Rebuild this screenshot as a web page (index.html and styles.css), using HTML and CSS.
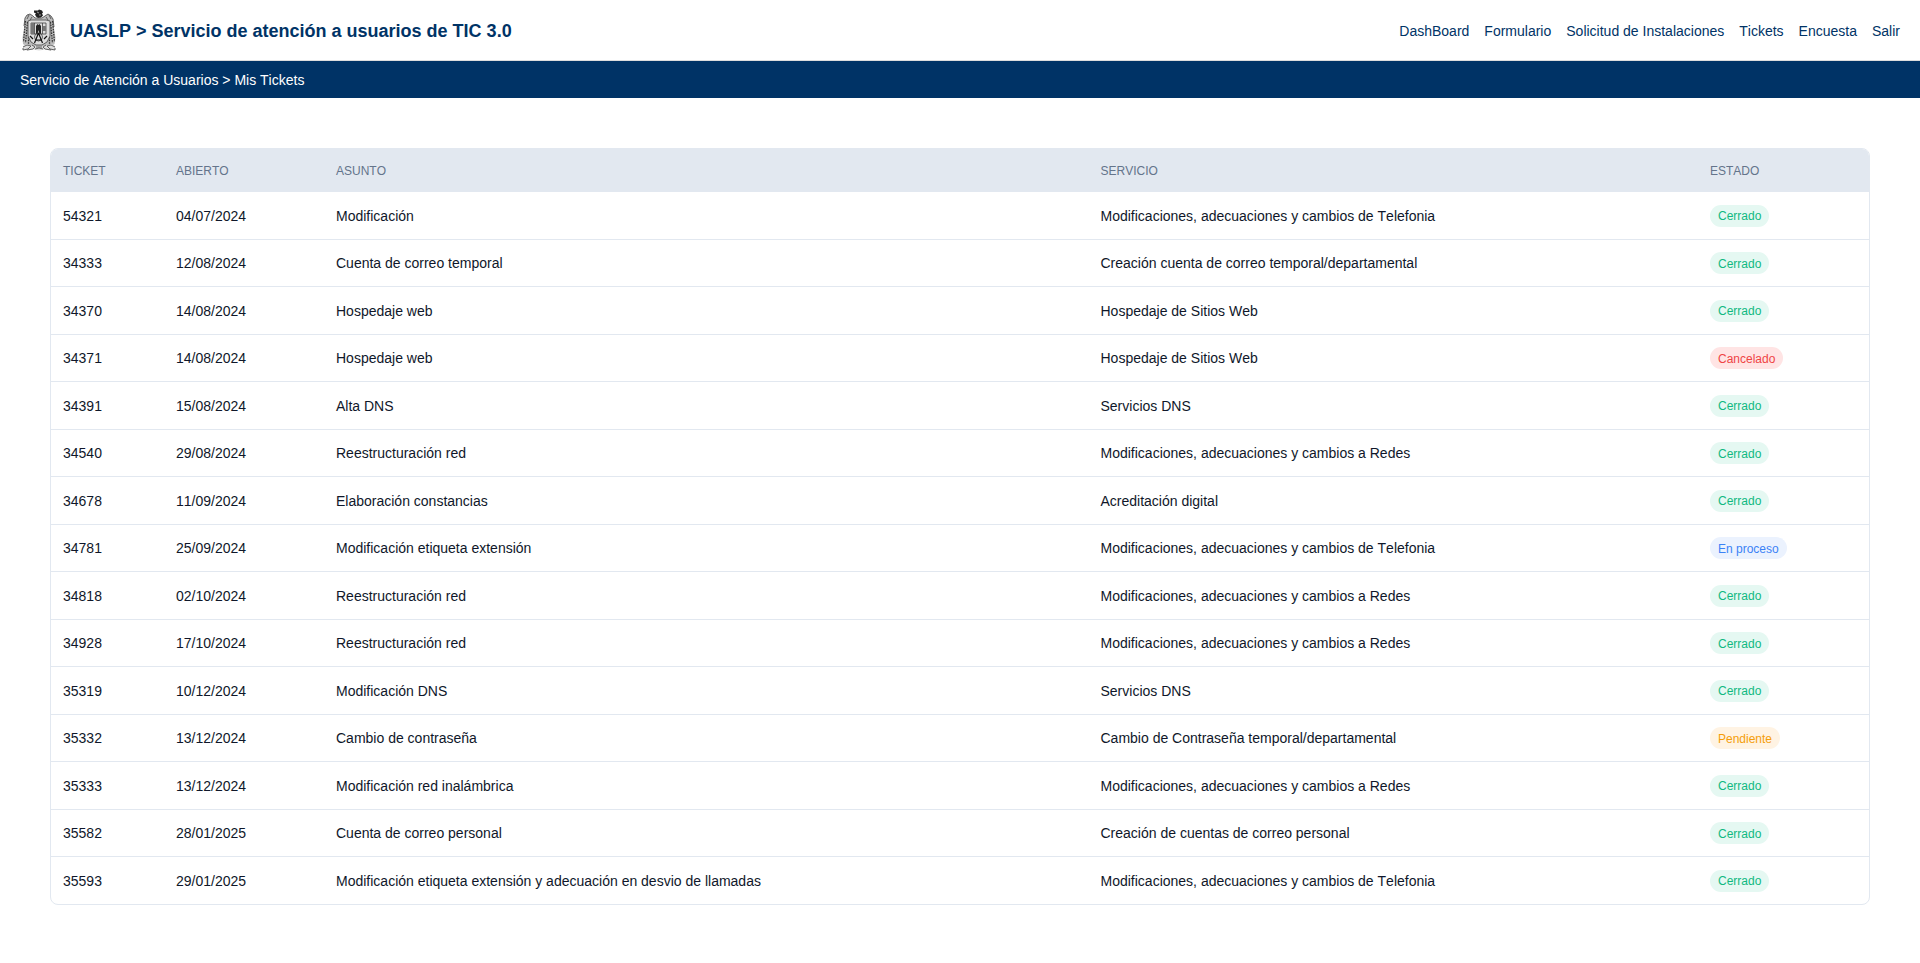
FILE: index.html
```html
<!DOCTYPE html>
<html lang="es">
<head>
<meta charset="utf-8">
<title>Mis Tickets</title>
<link rel="stylesheet" href="styles.css">
</head>
<body>
<header class="header">
  <div class="brand">
    <svg class="crest" viewBox="0 0 34 42" aria-hidden="true">
      <!-- eagle head -->
      <path class="ink" d="M12 1.500h4l1-1 3 1 1 2-1 1 1 2-2 2-3 .5-2-1.500-1-2 1-1-2-1z"/>
      <path class="light" d="M15 3l2 1M17 6l2 0"/>
      <!-- wings -->
      <path class="grey" d="M3 9l2-3 3-1 3 2 2 2h7l3-2 3-2 3 2 2 3 1 9 1.500 10-1 6-3 2H4l-3-2-.5-6 1.500-10z"/>
      <path class="line" d="M2 17l1-8 2-3 3-1 3 2 2 2h7l3-2 3-2 3 2 2 3 1 8M7 6l-2 4M10 8l-2 3M27 6l2 4M24 8l2 3"/>
      <path class="feather" d="M3.500 12L1.500 33M5.500 13L3.500 34M30.500 12l2 21M28.500 13l2 21M6.500 28v8M27.500 28v8"/>
      <!-- shield -->
      <path class="paper" d="M6 12l3-1h15l4 1v15l-3 6-5 3h-6l-5-3-3-6z"/>
      <path class="line" d="M6 12l3-1h15l4 1v15l-3 6-5 3h-6l-5-3-3-6zM9 14h15v11H9zM12.500 14v11M20.500 14v11"/>
      <path class="mid" d="M9 14h3v11H9zM21 17h3v5h-3z"/>
      <path class="ink" d="M14 17l1.500-2 1 1 1-1 1.500 2v8h-1.500l-1-4-1 4H14z"/>
      <circle class="line" cx="16.500" cy="28" r="4"/>
      <path class="bold" d="M16.500 24l-4 10M16.500 24l4 10M13 31h7M8 27l3 3M25 27l-3 3"/>
      <!-- ribbon -->
      <path class="paper" d="M1 37l4-2 6 2h12l6-2 4 2 .5 4-5 .5-5-1-6.500 1-6.500-1-5 1-4.500-.5z"/>
      <path class="line" d="M1 38l4-2 4 1-3 3-5 1 0-2M5 41l6-1 2-2-3-2M14 38h6M33 38l-4-2-4 1 3 3 5 1 0-2M29 41l-6-1-2-2 3-2M13 40l4-1 4 1"/>
    </svg>
    <h1 class="title">UASLP &gt; Servicio de atención a usuarios de TIC 3.0</h1>
  </div>
  <nav class="nav">
    <a>DashBoard</a><a>Formulario</a><a>Solicitud de Instalaciones</a><a>Tickets</a><a>Encuesta</a><a>Salir</a>
  </nav>
</header>
<div class="crumbs">Servicio de Atención a Usuarios &gt; Mis Tickets</div>
<main class="main">
  <div class="table">
    <div class="row head"><span>TICKET</span><span>ABIERTO</span><span>ASUNTO</span><span>SERVICIO</span><span>ESTADO</span></div>
    <div class="row"><span>54321</span><span>04/07/2024</span><span>Modificación</span><span>Modificaciones, adecuaciones y cambios de Telefonia</span><span><b class="badge closed">Cerrado</b></span></div>
    <div class="row"><span>34333</span><span>12/08/2024</span><span>Cuenta de correo temporal</span><span>Creación cuenta de correo temporal/departamental</span><span><b class="badge closed">Cerrado</b></span></div>
    <div class="row"><span>34370</span><span>14/08/2024</span><span>Hospedaje web</span><span>Hospedaje de Sitios Web</span><span><b class="badge closed">Cerrado</b></span></div>
    <div class="row"><span>34371</span><span>14/08/2024</span><span>Hospedaje web</span><span>Hospedaje de Sitios Web</span><span><b class="badge cancelled">Cancelado</b></span></div>
    <div class="row"><span>34391</span><span>15/08/2024</span><span>Alta DNS</span><span>Servicios DNS</span><span><b class="badge closed">Cerrado</b></span></div>
    <div class="row"><span>34540</span><span>29/08/2024</span><span>Reestructuración red</span><span>Modificaciones, adecuaciones y cambios a Redes</span><span><b class="badge closed">Cerrado</b></span></div>
    <div class="row"><span>34678</span><span>11/09/2024</span><span>Elaboración constancias</span><span>Acreditación digital</span><span><b class="badge closed">Cerrado</b></span></div>
    <div class="row"><span>34781</span><span>25/09/2024</span><span>Modificación etiqueta extensión</span><span>Modificaciones, adecuaciones y cambios de Telefonia</span><span><b class="badge progress">En proceso</b></span></div>
    <div class="row"><span>34818</span><span>02/10/2024</span><span>Reestructuración red</span><span>Modificaciones, adecuaciones y cambios a Redes</span><span><b class="badge closed">Cerrado</b></span></div>
    <div class="row"><span>34928</span><span>17/10/2024</span><span>Reestructuración red</span><span>Modificaciones, adecuaciones y cambios a Redes</span><span><b class="badge closed">Cerrado</b></span></div>
    <div class="row"><span>35319</span><span>10/12/2024</span><span>Modificación DNS</span><span>Servicios DNS</span><span><b class="badge closed">Cerrado</b></span></div>
    <div class="row"><span>35332</span><span>13/12/2024</span><span>Cambio de contraseña</span><span>Cambio de Contraseña temporal/departamental</span><span><b class="badge pending">Pendiente</b></span></div>
    <div class="row"><span>35333</span><span>13/12/2024</span><span>Modificación red inalámbrica</span><span>Modificaciones, adecuaciones y cambios a Redes</span><span><b class="badge closed">Cerrado</b></span></div>
    <div class="row"><span>35582</span><span>28/01/2025</span><span>Cuenta de correo personal</span><span>Creación de cuentas de correo personal</span><span><b class="badge closed">Cerrado</b></span></div>
    <div class="row"><span>35593</span><span>29/01/2025</span><span>Modificación etiqueta extensión y adecuación en desvio de llamadas</span><span>Modificaciones, adecuaciones y cambios de Telefonia</span><span><b class="badge closed">Cerrado</b></span></div>
  </div>
</main>
</body>
</html>
```
FILE: styles.css
```css
* { box-sizing: border-box; }
body {
  margin: 0;
  background: #fff;
  color: #0f172a;
  font-family: Helvetica, "Liberation Sans", Arial, sans-serif;
  font-size: 14px;
  line-height: 20px;
  font-kerning: none;
}
.header {
  display: flex;
  justify-content: space-between;
  align-items: center;
  height: 61px;
  padding: 0 20px;
  border-bottom: 1px solid #ddd;
}
.brand { display: flex; align-items: center; gap: 14px; padding-left: 2px; }
.crest { width: 34px; height: 42px; }
.crest .ink { fill: #222; }
.crest .mid { fill: #777; }
.crest .grey { fill: #bbb; }
.crest .paper { fill: #ddd; }
.crest .line { fill: none; stroke: #444; stroke-width: .8; }
.crest .light { fill: none; stroke: #ccc; stroke-width: .7; }
.crest .feather { fill: none; stroke: #333; stroke-width: 1.3; stroke-dasharray: 1.6 1; }
.crest .bold { fill: none; stroke: #111; stroke-width: 1.2; }
.title { margin: 0; padding-top: 2px; font-size: 18px; line-height: 24px; color: #036; font-weight: 700; }
.nav { display: flex; gap: 15px; padding-top: 2px; color: #036; }
.crumbs { height: 37px; padding: 9px 20px 8px; background: #036; color: #fff; }
.main { padding: 50px; }
.table { border: 1px solid #e2e8f0; border-radius: 8px; overflow: hidden; }
.row {
  display: grid;
  grid-template-columns: 113px 160px 764.5px 609.5px 1fr;
  align-items: center;
  height: 47.5px;
  padding-top: 1px;
  border-bottom: 1px solid #e2e8f0;
}
.row:last-child { border-bottom: 0; height: 46.5px; }
.row > span { padding-left: 12px; }
.head { height: 43px; padding-top: 2px; background: #e2e8f0; color: #64748b; font-size: 12px; }
.badge {
  display: block;
  width: fit-content;
  height: 22px;
  padding: .5px 8px 0;
  border-radius: 11px;
  font-size: 12px;
  line-height: 22px;
  font-weight: 400;
}
.closed { background: #e5f8f2; color: #10b981; }
.cancelled { background: #ffe4e4; color: #ef4444; }
.progress { background: #ebf2fe; color: #3b82f6; }
.pending { background: #fff3e3; color: #f59e0b; }
```
